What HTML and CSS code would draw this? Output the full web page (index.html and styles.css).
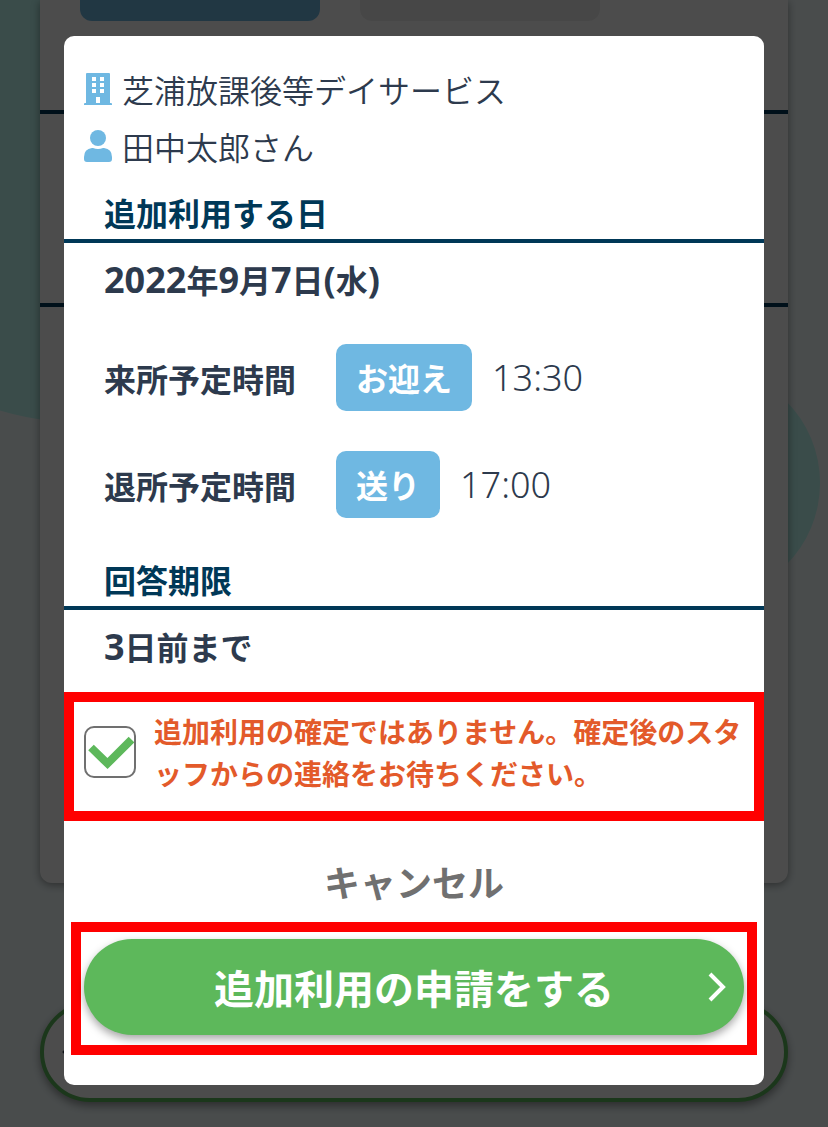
FILE: index.html
```
<!DOCTYPE html>
<html lang="ja">
<head>
    <meta charset="UTF-8">
    <meta name="viewport" content="width=device-width, initial-scale=1">
    <title>追加利用の申請</title>
    <link rel="stylesheet" href="styles.css">
</head>
<body>
    <!-- 背面のページ -->
    <div class="page" aria-hidden="true">
        <span class="circle circle-left"></span>
        <span class="circle circle-right"></span>
        <div class="card">
            <div class="tabs">
                <span class="tab selected"></span>
                <span class="tab"></span>
            </div>
            <div class="card-row row-first"></div>
            <div class="card-row row-second"></div>
            <div class="card-row row-last"></div>
        </div>
        <div class="back-button">
            <svg class="arrow" viewBox="0 0 18 30">
                <path fill="none" stroke="currentColor" stroke-width="4" d="M16 2L3 15l13 13"/>
            </svg>
        </div>
    </div>

    <!-- 確認モーダル -->
    <div class="overlay">
        <form class="modal" role="dialog" aria-modal="true" aria-label="追加利用の申請">
            <div class="profile">
                <p class="profile-row">
                    <svg class="icon" viewBox="0 0 28 32" aria-hidden="true">
                        <path fill="currentColor" fill-rule="evenodd" d="M3 0h22q1 0 1 1v29h1q1 0 1 1v1H0v-1q0-1 1-1h1V1q0-1 1-1zM8 4v4h4V4zM16 4v4h4V4zM8 10v4h4v-4zM16 10v4h4v-4zM8 16v4h4v-4zM16 16v4h4v-4zM12 24v6h4v-6z"/>
                    </svg>
                    芝浦放課後等デイサービス
                </p>
                <p class="profile-row">
                    <svg class="icon" viewBox="0 0 28 32" aria-hidden="true">
                        <circle fill="currentColor" cx="14" cy="8" r="8"/>
                        <path fill="currentColor" d="M8 18h1q5 2 10 0h1q8 1 8 9v2q0 3-3 3H3q-3 0-3-3v-2q0-8 8-9z"/>
                    </svg>
                    田中太郎さん
                </p>
            </div>

            <h2 class="title">追加利用する日</h2>
            <p class="value"><span class="num">2022</span>年<span class="num">9</span>月<span class="num">7</span>日<span class="num">(</span>水<span class="num">)</span></p>
            <dl class="times">
                <div class="time">
                    <dt>来所予定時間</dt>
                    <dd><span class="badge">お迎え</span><span class="num">13:30</span></dd>
                </div>
                <div class="time">
                    <dt>退所予定時間</dt>
                    <dd><span class="badge">送り</span><span class="num">17:00</span></dd>
                </div>
            </dl>

            <h2 class="title">回答期限</h2>
            <p class="value"><span class="num">3</span>日前まで</p>

            <div class="agree">
                <input class="check" type="checkbox" id="agree" checked>
                <label for="agree">追加利用の確定ではありません。確定後のスタッフからの連絡をお待ちください。</label>
            </div>

            <button class="cancel" type="button">キャンセル</button>
            <div class="submit-frame">
                <button class="submit" type="submit">
                    <span class="submit-text">追加利用の申請をする</span>
                    <svg class="arrow" viewBox="0 0 18 30" aria-hidden="true">
                        <path fill="none" stroke="currentColor" stroke-width="4" d="M2 2l13 13L2 28"/>
                    </svg>
                </button>
            </div>
        </form>
    </div>
</body>
</html>
```

FILE: styles.css
```
*{
    margin: 0;
    padding: 0;
    box-sizing: border-box;
}
body{
    background: #f4feff;
    color: #2d3a4d;
    font-family: "Noto Sans CJK JP", sans-serif;
    font-size: 32px;
    line-height: 48px;
}
button, input{
    font: inherit;
}
/* 背面のページ */
.page{
    position: absolute;
    top: 0;
    left: 0;
    width: 100%;
    height: 100%;
    padding: 0 40px;
    overflow: hidden;
}
.circle{
    position: absolute;
    border-radius: 50%;
    background: #c1fdf7;
}
.circle-left{
    left: -214px;
    top: -177px;
    width: 600px;
    height: 600px;
}
.circle-right{
    right: 8px;
    top: 367px;
    width: 232px;
    height: 232px;
}
.card{
    position: relative;
    background: #fff;
    border-radius: 0 0 12px 12px;
    box-shadow: 0 2px 8px rgba(0,0,0,.4);
}
.tabs{
    display: flex;
    gap: 40px;
    padding: 0 40px;
}
.tab{
    width: 240px;
    height: 21px;
    border-radius: 0 0 12px 12px;
    background: #eee;
}
.tab.selected{
    background: #6fb8e2;
}
.card-row{
    border-bottom: 4px solid #003857;
}
.row-first{
    height: 93px;
}
.row-second{
    height: 193px;
}
.row-last{
    height: 576px;
    border-bottom: none;
}
.back-button{
    position: relative;
    display: flex;
    align-items: center;
    height: 100px;
    margin-top: 119px;
    padding: 0 18px;
    border: 4px solid #5db85b;
    border-radius: 50px;
    background: #fff;
    box-shadow: 0 4px 8px rgba(0,0,0,.4);
}
/* モーダル */
.overlay{
    position: relative;
    min-height: 100vh;
    padding: 36px 64px 40px;
    background: rgba(0,0,0,.7);
}
.modal{
    padding: 24px 0 30px;
    border-radius: 10px;
    background: #fff;
}
.profile{
    padding: 0 20px;
}
.profile-row{
    display: flex;
    align-items: center;
    gap: 10px;
    height: 57px;
    font-weight: 350;
}
.icon{
    width: 28px;
    height: 32px;
    color: #6fb8e2;
}
.title{
    padding: 14px 40px 3px;
    border-bottom: 4px solid #003857;
    color: #003857;
    font-size: 32px;
    line-height: 48px;
}
.value{
    padding: 0 40px;
    font-weight: 700;
    line-height: 72px;
}
.num{
    font-family: "Noto Sans", sans-serif;
    font-size: 36px;
    line-height: 48px;
}
.times{
    display: grid;
    gap: 40px;
    padding: 29px 40px 23px;
}
.time{
    display: flex;
    align-items: center;
    gap: 40px;
}
.time dt{
    font-weight: 700;
}
.time dd{
    display: flex;
    align-items: center;
    gap: 20px;
    font-weight: 300;
}
.badge{
    padding: 0 20px;
    border-radius: 10px;
    background: #6fb8e2;
    color: #fff;
    font-weight: 700;
    line-height: 67px;
}
.agree{
    display: flex;
    align-items: center;
    gap: 18px;
    margin-top: 10px;
    padding: 8px 10px 17px;
    border: 10px solid #f00;
    color: #e35a2a;
    font-size: 28px;
    font-weight: 700;
    line-height: 42px;
}
.check{
    flex: none;
    appearance: none;
    width: 52px;
    height: 52px;
    border: 2px solid #707070;
    border-radius: 10px;
}
.check:checked{
    background: #fff url("data:image/svg+xml,%3Csvg xmlns='http://www.w3.org/2000/svg' viewBox='0 0 48 48'%3E%3Cpath fill='none' stroke='%235db85b' stroke-width='8' d='M5 19.5l16.5 16 24-24'/%3E%3C/svg%3E") center / contain no-repeat;
}
.cancel{
    display: block;
    margin: 36px auto 17px;
    border: none;
    background: none;
    color: #707070;
    font-size: 36px;
    font-weight: 700;
    line-height: 48px;
}
.submit-frame{
    margin: 0 7px;
    padding: 7px 3px 10px;
    border: 10px solid #f00;
}
.submit{
    display: flex;
    align-items: center;
    width: 100%;
    height: 96px;
    padding: 0 18px;
    border: none;
    border-radius: 48px;
    background: #5db85b;
    box-shadow: 0 4px 8px rgba(0,0,0,.35);
    color: #fff;
    font-size: 40px;
    font-weight: 700;
}
.submit-text{
    flex: 1;
    padding-left: 18px;
}
.arrow{
    width: 18px;
    height: 30px;
}
```
